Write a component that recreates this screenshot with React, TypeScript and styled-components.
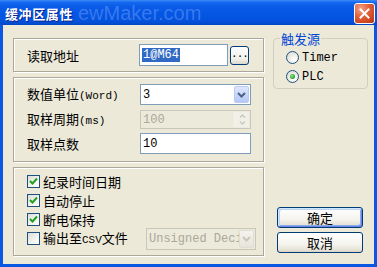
import React from 'react';
import styled, { createGlobalStyle, css } from 'styled-components';

const GlobalStyle = createGlobalStyle`
  html, body { margin: 0; padding: 0; background: #ECE9D8; }
  * { box-sizing: border-box; }
  body { font-family: "Noto Sans CJK SC", "Liberation Sans", sans-serif; font-size: 13px; }
`;

const CJK = `"Noto Sans CJK SC", sans-serif`;
const MONO = `"Liberation Mono", "Noto Sans CJK SC", monospace`;

const Window = styled.div`
  width: 377px;
  height: 267px;
  display: flex;
  flex-direction: column;
  background: #0A58E2;
  overflow: hidden;
`;

const TitleBar = styled.div`
  position: relative;
  height: 25px;
  flex: none;
  display: flex;
  align-items: center;
  padding: 0 2px 0 5px;
  background: linear-gradient(to bottom, #3D8BF5 0%, #1468F0 10%, #0A5CE8 25%, #0456E3 55%, #0352DC 85%, #0246C4 100%);
`;

const Watermark = styled.div`
  position: absolute;
  left: 78px;
  top: 2px;
  font-family: "Liberation Sans", sans-serif;
  font-size: 20px;
  line-height: 22px;
  color: rgba(120, 165, 255, 0.45);
  white-space: nowrap;
`;

const TitleText = styled.div`
  position: relative;
  font-family: ${CJK};
  font-weight: 700;
  font-size: 13px;
  letter-spacing: 0.6px;
  line-height: 1;
  color: #fff;
  text-shadow: 1px 1px 0 #0A1E8A;
  margin-top: 2px;
`;

const CloseButton = styled.div`
  margin-left: auto;
  width: 21px;
  height: 21px;
  border: 1px solid #fff;
  border-radius: 3px;
  background: radial-gradient(circle at 30% 25%, #F2A48C 0%, #E4633C 40%, #CC4520 75%, #B2350F 100%);
  display: flex;
  align-items: center;
  justify-content: center;
  margin-top: 1px;
`;

const Body = styled.div`
  flex: 1;
  margin: 0 3px 3px;
  background: #ECE9D8;
  display: flex;
  gap: 9px;
  padding: 13px 6px 0 10px;
`;

const LeftColumn = styled.div`
  width: 251px;
  display: flex;
  flex-direction: column;
  gap: 5px;
`;

const Panel = styled.div`
  border: 1px solid #ACA899;
  box-shadow: inset 1px 1px 0 #fff, 1px 1px 0 #fff;
  display: flex;
  flex-direction: column;
`;

const AddressPanel = styled(Panel)`
  height: 34px;
  justify-content: center;
  padding: 0 0 0 13px;
`;

const ParamPanel = styled(Panel)`
  height: 85px;
  padding: 6px 0 0 13px;
  gap: 4px;
`;

const OptionPanel = styled(Panel)`
  height: 89px;
  padding: 4px 7px 0 13px;
`;

const FieldRow = styled.div<{ $h?: number }>`
  display: flex;
  align-items: center;
  height: ${(p) => p.$h ?? 21}px;
`;

const Label = styled.div<{ $w?: number }>`
  width: ${(p) => p.$w ?? 112}px;
  flex: none;
  font-family: ${CJK};
  font-size: 13px;
  line-height: 1;
  color: #000;
  white-space: nowrap;
`;

const Latin = styled.span<{ $size?: number }>`
  font-family: ${MONO};
  font-size: ${(p) => p.$size ?? 11}px;
`;

const Box = styled.div<{ $w: number; $h: number; $disabled?: boolean }>`
  position: relative;
  width: ${(p) => p.$w}px;
  height: ${(p) => p.$h}px;
  border: 1px solid ${(p) => (p.$disabled ? '#C9C7BA' : '#7F9DB9')};
  background: ${(p) => (p.$disabled ? '#EBEADB' : '#fff')};
  color: ${(p) => (p.$disabled ? '#ACA899' : '#000')};
  display: flex;
  align-items: center;
  padding-left: 2px;
  font-family: ${MONO};
  font-size: 12px;
  line-height: 1;
  flex: none;
`;

const Selected = styled.span`
  background: #316AC5;
  color: #fff;
  padding: 1px 1px;
`;

const DropButton = styled.div<{ $disabled?: boolean }>`
  position: absolute;
  right: 1px;
  top: 1px;
  bottom: 1px;
  width: 15px;
  border-radius: 2px;
  border: 1px solid ${(p) => (p.$disabled ? '#E0DED2' : '#B9CBF3')};
  background: ${(p) =>
    p.$disabled
      ? 'linear-gradient(#F4F3EE, #E6E4DA)'
      : 'linear-gradient(#DCE7FE, #C4D5FB 60%, #B5C8F6)'};
  display: flex;
  align-items: center;
  justify-content: center;
`;

const SpinButtons = styled.div`
  position: absolute;
  right: 1px;
  top: 1px;
  bottom: 1px;
  width: 15px;
  display: flex;
  flex-direction: column;
  border-left: 1px solid #F4F3EE;
  background: #F0EFE8;
`;

const SpinHalf = styled.div`
  flex: 1;
  display: flex;
  align-items: center;
  justify-content: center;
`;

const SmallButton = styled.div`
  margin-left: 2px;
  width: 19px;
  height: 19px;
  border: 1px solid #003C74;
  border-radius: 3px;
  background: linear-gradient(#FFFFFF, #F1F0EA 70%, #DCD7CB);
  display: flex;
  align-items: flex-end;
  justify-content: center;
  padding-bottom: 4px;
  font-family: ${MONO};
  font-size: 11px;
  line-height: 1;
  letter-spacing: -1px;
  color: #000;
`;

const CheckRow = styled.div`
  display: flex;
  align-items: center;
  height: 19px;
  gap: 3px;
`;

const CheckText = styled.span`
  font-family: ${CJK};
  font-size: 13px;
  line-height: 1;
  color: #000;
  white-space: nowrap;
`;

const CheckBox = styled.div`
  width: 13px;
  height: 13px;
  flex: none;
  border: 1px solid #1C5180;
  background: linear-gradient(135deg, #DCDCD7 0%, #F4F4F0 60%, #FFFFFF 100%);
  display: flex;
  align-items: center;
  justify-content: center;
`;

const SelectSlot = styled.div`
  margin-left: auto;
`;

const RightColumn = styled.div`
  width: 95px;
  display: flex;
  flex-direction: column;
  padding-bottom: 11px;
`;

const GroupBox = styled.div`
  position: relative;
  height: 51px;
  border: 1px solid #D0D0BF;
  border-radius: 4px;
  padding: 9px 0 0 12px;
  display: flex;
  flex-direction: column;
`;

const Legend = styled.div`
  position: absolute;
  left: 6px;
  top: -8px;
  padding: 0 1px;
  background: #ECE9D8;
  font-family: ${CJK};
  font-size: 13px;
  line-height: 15px;
  color: #0046D5;
`;

const RadioRow = styled.div`
  display: flex;
  align-items: center;
  height: 19px;
  gap: 3px;
`;

const Radio = styled.div<{ $checked?: boolean }>`
  width: 13px;
  height: 13px;
  border-radius: 50%;
  border: 1px solid #1C5180;
  background: radial-gradient(circle at 65% 70%, #FFFFFF 0%, #F0F0EA 40%, #D6D6CE 100%);
  display: flex;
  align-items: center;
  justify-content: center;
  ${(p) =>
    p.$checked &&
    css`
      &::after {
        content: '';
        width: 5px;
        height: 5px;
        border-radius: 50%;
        background: radial-gradient(circle at 40% 40%, #8EE08E, #21A121 70%);
      }
    `}
`;

const RadioText = styled.span`
  font-family: ${MONO};
  font-size: 12px;
  line-height: 1;
  color: #000;
`;

const ButtonStack = styled.div`
  margin-top: auto;
  margin-left: 4px;
  display: flex;
  flex-direction: column;
  gap: 4px;
`;

const DialogButton = styled.div<{ $default?: boolean }>`
  width: 86px;
  height: 21px;
  border: 1px solid #003C74;
  border-radius: 3px;
  background: linear-gradient(#FFFFFF 0%, #F4F3EE 60%, #E5E1D6 90%, #D6D0C5 100%);
  display: flex;
  align-items: center;
  justify-content: center;
  font-family: ${CJK};
  font-size: 13px;
  line-height: 1;
  color: #000;
  ${(p) =>
    p.$default &&
    css`
      box-shadow: inset 1px 1px 0 #CEE7FF, inset -1px -1px 0 #6982EE, inset 2px 2px 0 #BCD4F6,
        inset -2px -2px 0 #89ADE4;
    `}
`;

const Chevron = ({ color }: { color: string }) => (
  <svg width="9" height="6" viewBox="0 0 9 6">
    <path d="M1 1 L4.5 4.5 L8 1" fill="none" stroke={color} strokeWidth="2" />
  </svg>
);

const Check = () => (
  <svg width="9" height="9" viewBox="0 0 9 9">
    <path d="M1 4 L3.5 6.5 L8 1.5" fill="none" stroke="#21A121" strokeWidth="2" />
  </svg>
);

export default function App() {
  return (
    <>
      <GlobalStyle />
      <Window>
        <TitleBar>
          <Watermark>ewMaker.com</Watermark>
          <TitleText>缓冲区属性</TitleText>
          <CloseButton>
            <svg width="11" height="11" viewBox="0 0 11 11">
              <path d="M1.5 1.5 L9.5 9.5 M9.5 1.5 L1.5 9.5" stroke="#fff" strokeWidth="2" strokeLinecap="square" />
            </svg>
          </CloseButton>
        </TitleBar>
        <Body>
          <LeftColumn>
            <AddressPanel>
              <FieldRow $h={22}>
                <Label>读取地址</Label>
                <Box $w={89} $h={22}>
                  <Selected>1@M64</Selected>
                </Box>
                <SmallButton>...</SmallButton>
              </FieldRow>
            </AddressPanel>
            <ParamPanel>
              <FieldRow $h={21} style={{ marginBottom: 1 }}>
                <Label $w={113}>
                  数值单位<Latin>(Word)</Latin>
                </Label>
                <Box $w={111} $h={21}>
                  3
                  <DropButton>
                    <Chevron color="#4D6185" />
                  </DropButton>
                </Box>
              </FieldRow>
              <FieldRow $h={19}>
                <Label $w={113}>
                  取样周期<Latin>(ms)</Latin>
                </Label>
                <Box $w={111} $h={19} $disabled>
                  100
                  <SpinButtons>
                    <SpinHalf>
                      <svg width="7" height="4" viewBox="0 0 7 4">
                        <path d="M1 3.5 L3.5 1 L6 3.5" fill="none" stroke="#C9C7BA" strokeWidth="1.3" />
                      </svg>
                    </SpinHalf>
                    <SpinHalf>
                      <svg width="7" height="4" viewBox="0 0 7 4">
                        <path d="M1 0.5 L3.5 3 L6 0.5" fill="none" stroke="#C9C7BA" strokeWidth="1.3" />
                      </svg>
                    </SpinHalf>
                  </SpinButtons>
                </Box>
              </FieldRow>
              <FieldRow $h={21}>
                <Label $w={113}>取样点数</Label>
                <Box $w={111} $h={21}>
                  10
                </Box>
              </FieldRow>
            </ParamPanel>
            <OptionPanel>
              <CheckRow>
                <CheckBox>
                  <Check />
                </CheckBox>
                <CheckText>纪录时间日期</CheckText>
              </CheckRow>
              <CheckRow>
                <CheckBox>
                  <Check />
                </CheckBox>
                <CheckText>自动停止</CheckText>
              </CheckRow>
              <CheckRow>
                <CheckBox>
                  <Check />
                </CheckBox>
                <CheckText>断电保持</CheckText>
              </CheckRow>
              <CheckRow>
                <CheckBox />
                <CheckText>
                  输出至<Latin $size={11}>CSV</Latin>文件
                </CheckText>
                <SelectSlot>
                  <Box $w={110} $h={22} $disabled>
                    Unsigned Deci
                    <DropButton $disabled>
                      <Chevron color="#C9C7BA" />
                    </DropButton>
                  </Box>
                </SelectSlot>
              </CheckRow>
            </OptionPanel>
          </LeftColumn>
          <RightColumn>
            <GroupBox>
              <Legend>触发源</Legend>
              <RadioRow>
                <Radio />
                <RadioText>Timer</RadioText>
              </RadioRow>
              <RadioRow>
                <Radio $checked />
                <RadioText>PLC</RadioText>
              </RadioRow>
            </GroupBox>
            <ButtonStack>
              <DialogButton $default>确定</DialogButton>
              <DialogButton>取消</DialogButton>
            </ButtonStack>
          </RightColumn>
        </Body>
      </Window>
    </>
  );
}
